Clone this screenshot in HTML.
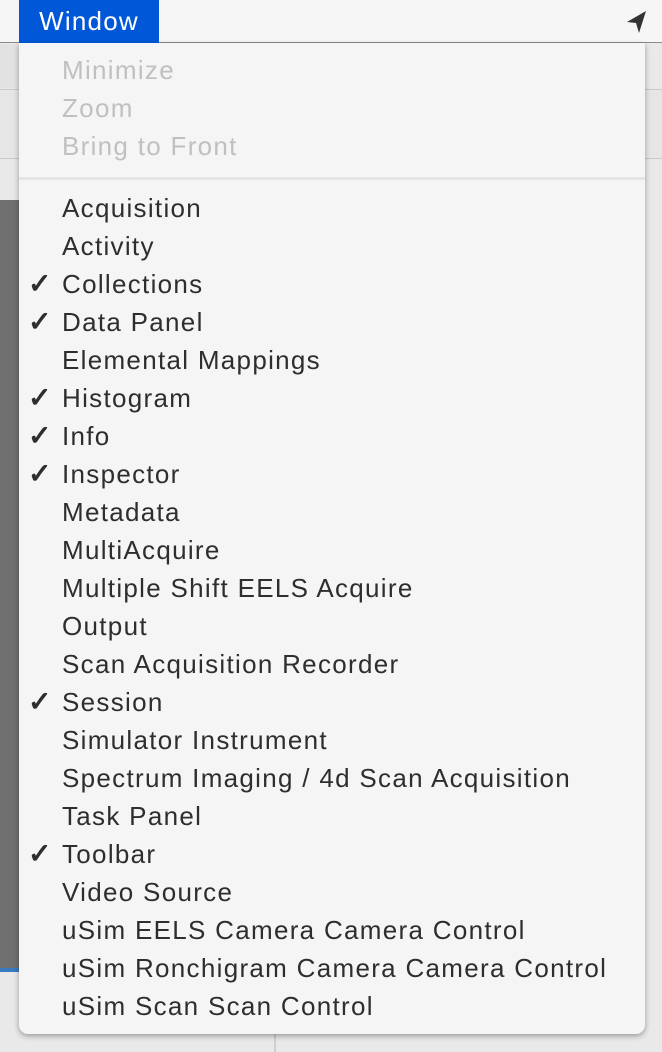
<!DOCTYPE html>
<html><head><style>
body{margin:0;width:662px;height:1052px;position:relative;overflow:hidden;background:#e9e9e9;font-family:"Liberation Sans",sans-serif}
.bar{position:absolute;left:0;top:0;width:662px;height:43px;background:#f6f6f6;border-bottom:1px solid #8a8a8a;box-sizing:border-box}
.win{position:absolute;left:19px;top:0;width:140px;height:43px;background:#0057d8;color:#fff;font-size:26px;letter-spacing:1.2px;line-height:43px;text-align:center}
.strip{position:absolute;background:#dcdcdc}
.menu{position:absolute;left:19px;top:43px;width:626px;height:991px;background:#f5f5f5;border-radius:0 0 9px 9px;box-shadow:0 2px 6px rgba(0,0,0,.35)}
.it{position:absolute;left:43px;font-size:26px;letter-spacing:1.3px;color:#2e2e2e;line-height:38px;white-space:nowrap}
.dis{color:#c0c0c0}
.ck{position:absolute;left:-34px;font-size:28px;font-weight:bold;letter-spacing:0}
.sep{position:absolute;left:0;right:0;top:134px;height:3px;background:#e4e4e4}
</style></head><body>
<div class="strip" style="left:0;top:44px;width:19px;height:44px;background:#e2e2e2"></div>
<div class="strip" style="left:0;top:89px;width:19px;height:68px;background:#e6e6e6;border-top:1px solid #c8c8c8;border-bottom:1px solid #c8c8c8"></div>
<div class="strip" style="left:0;top:200px;width:19px;height:770px;background:#707070"></div>
<div class="strip" style="left:0;top:968px;width:19px;height:4px;background:#3a7bc0"></div>
<div class="strip" style="left:645px;top:89px;width:17px;height:68px;background:#e6e6e6;border-top:1px solid #c8c8c8;border-bottom:1px solid #c8c8c8"></div>
<div class="strip" style="left:274px;top:1034px;width:2px;height:18px;background:#d0d0d0"></div>
<div class="bar"><div class="win">Window</div>
<svg style="position:absolute;left:626px;top:10px" width="22" height="24" viewBox="0 0 22 24"><path d="M20 1 L1 12 L10 13 L13 23 Z" fill="#333"/></svg></div>
<div class="menu">
<div class="it dis" style="top:8px">Minimize</div>
<div class="it dis" style="top:46px">Zoom</div>
<div class="it dis" style="top:84px">Bring to Front</div>
<div class="sep"></div>
<div class="it" style="top:146px">Acquisition</div>
<div class="it" style="top:184px">Activity</div>
<div class="it" style="top:222px"><span class="ck">✓</span>Collections</div>
<div class="it" style="top:260px"><span class="ck">✓</span>Data Panel</div>
<div class="it" style="top:298px">Elemental Mappings</div>
<div class="it" style="top:336px"><span class="ck">✓</span>Histogram</div>
<div class="it" style="top:374px"><span class="ck">✓</span>Info</div>
<div class="it" style="top:412px"><span class="ck">✓</span>Inspector</div>
<div class="it" style="top:450px">Metadata</div>
<div class="it" style="top:488px">MultiAcquire</div>
<div class="it" style="top:526px">Multiple Shift EELS Acquire</div>
<div class="it" style="top:564px">Output</div>
<div class="it" style="top:602px">Scan Acquisition Recorder</div>
<div class="it" style="top:640px"><span class="ck">✓</span>Session</div>
<div class="it" style="top:678px">Simulator Instrument</div>
<div class="it" style="top:716px">Spectrum Imaging / 4d Scan Acquisition</div>
<div class="it" style="top:754px">Task Panel</div>
<div class="it" style="top:792px"><span class="ck">✓</span>Toolbar</div>
<div class="it" style="top:830px">Video Source</div>
<div class="it" style="top:868px">uSim EELS Camera Camera Control</div>
<div class="it" style="top:906px">uSim Ronchigram Camera Camera Control</div>
<div class="it" style="top:944px">uSim Scan Scan Control</div>
</div>
</body></html>
